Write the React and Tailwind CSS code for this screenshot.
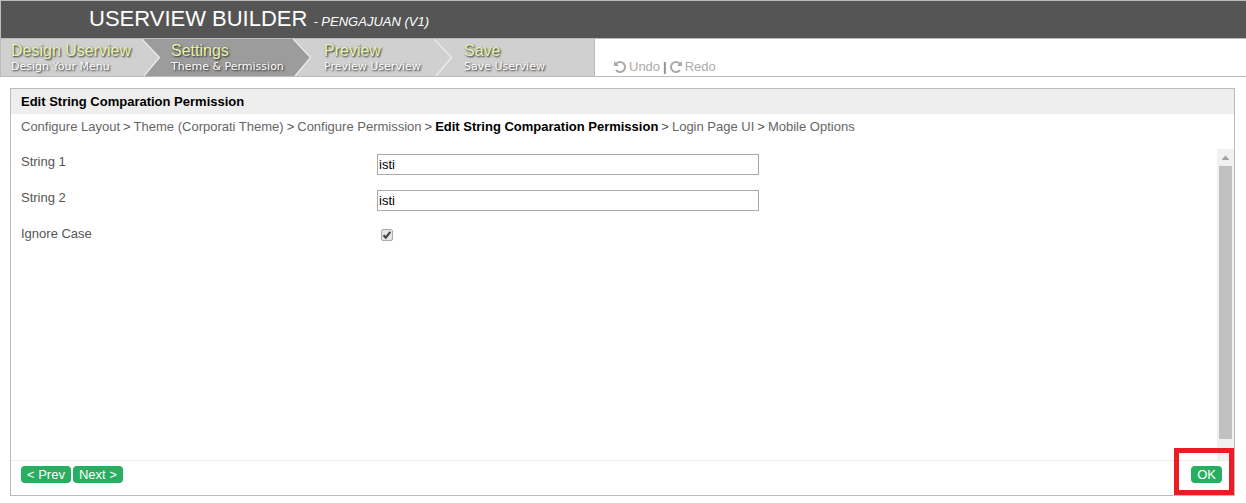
const steps = [
  { title: "Design Userview", sub: "Design Your Menu", box: "w-[141px] pl-[10px] bg-[#d0d0d0]", tip: "#d0d0d0" },
  { title: "Settings", sub: "Theme & Permission", box: "w-[151px] pl-[29px] bg-[#9c9c9c]", tip: "#9c9c9c" },
  { title: "Preview", sub: "Preview Userview", box: "w-[141px] pl-[31px] bg-[#d0d0d0]", tip: "#d0d0d0" },
  { title: "Save", sub: "Save Userview", box: "w-[160px] pl-[30px] bg-[#d0d0d0]", tip: null },
];

const crumbs = [
  "Configure Layout",
  "Theme (Corporati Theme)",
  "Configure Permission",
  "Edit String Comparation Permission",
  "Login Page UI",
  "Mobile Options",
];

function TurnIcon({ className = "" }) {
  return (
    <svg className={className} width="12" height="12" viewBox="0 128 1536 1536" fill="currentColor" aria-hidden="true">
      <path d="M1536 896q0 156-61 298t-164 245-245 164-298 61q-172 0-327-72.500t-264-204.500q-7-10-6.500-22.500t8.500-20.500l137-138q10-9 25-9 16 2 23 12 73 95 179 147t225 52q104 0 198.500-40.500t163.500-109.500 109.500-163.500 40.500-198.500-40.500-198.500-109.500-163.500-163.500-109.500-198.500-40.500q-98 0-188 35.500t-160 101.500l137 138q31 30 14 69-17 40-59 40h-448q-26 0-45-19t-19-45v-448q0-42 40-59 39-17 69 14l130 129q107-101 244.500-156.500t284.500-55.500q156 0 298 61t245 164 164 245 61 298z" />
    </svg>
  );
}

function Step({ title, sub, box, tip }) {
  return (
    <li className={`relative h-[37px] ${box}`}>
      <a href="#" className="block pt-[2px] whitespace-nowrap">
        <span className="block text-[16px] leading-[19px] text-[#e6f4ac] [text-shadow:1px_1px_2px_#222]">{title}</span>
        <span className="block font-['DejaVu_Sans',sans-serif] text-[11px] leading-[13px] text-white [text-shadow:1px_1px_2px_#222]">{sub}</span>
      </a>
      {tip && (
        <svg className="absolute top-0 left-full z-10" width="19" height="37" viewBox="0 0 19 37" aria-hidden="true">
          <path d="M0 0L17.500 18.500L2 37H0Z" fill={tip} />
          <path d="M0 0L17.500 18.500L2 37" fill="none" stroke="#eee" strokeWidth="1.200" />
        </svg>
      )}
    </li>
  );
}

function Field({ id, label, children }) {
  return (
    <div className="flex h-[36px] items-start">
      <label htmlFor={id} className="w-[356px] shrink-0 leading-[16px]">{label}</label>
      {children}
    </div>
  );
}

const button = "h-[17px] rounded-[4px] bg-[#27ae60] px-[6px] text-[13px] leading-[17px] text-white";
const input = "h-[21px] w-[382px] border border-[#a9a9a9] px-px text-[13px] text-black";

export default function App() {
  return (
    <div className="min-h-screen bg-white font-['Liberation_Sans',Arial,sans-serif] text-[13px] text-[#555]">
      <header className="flex h-[38px] items-baseline border-t border-l border-[#bbb] bg-[#555] pl-[88px] text-white">
        <h1 className="text-[22px] leading-[36px]">USERVIEW BUILDER</h1>
        <span className="pl-[6px] text-[13px] italic">- PENGAJUAN (V1)</span>
      </header>
      <nav className="flex h-[39px] border-y border-l border-[#bbb]">
        <ol className="flex border-r border-[#bbb]">
          {steps.map((s) => <Step key={s.title} {...s} />)}
        </ol>
        <div className="flex items-center gap-[3px] pt-[18px] pl-[19px] leading-[16px] text-[#aaa]">
          <button className="flex items-center gap-[3px]"><TurnIcon />Undo</button>
          <span className="font-bold text-[#888]">|</span>
          <button className="flex items-center gap-[3px]"><TurnIcon className="-scale-x-100" />Redo</button>
        </div>
      </nav>
      <main className="relative mt-[11px] mr-[11px] ml-[10px] border border-[#bbb]">
        <h2 className="h-[25px] bg-[#eee] pl-[10px] font-bold leading-[25px] text-black">Edit String Comparation Permission</h2>
        <nav className="flex h-[35px] gap-[3px] pt-[5px] pl-[10px] leading-[16px]">
          {crumbs.map((c, i) => (
            <span key={c} className="flex gap-[3px]">
              {i > 0 && <span>&gt;</span>}
              <a href="#" className={i === 3 ? "font-bold text-black" : "text-[#666]"}>{c}</a>
            </span>
          ))}
        </nav>
        <div className="flex h-[311px]">
          <form className="grow pt-[5px] pl-[10px]">
            <Field id="s1" label="String 1"><input id="s1" defaultValue="isti" className={input} /></Field>
            <Field id="s2" label="String 2"><input id="s2" defaultValue="isti" className={input} /></Field>
            <Field id="ic" label="Ignore Case">
              <span className="grid pt-[3px] pl-[4px]">
                <input id="ic" type="checkbox" defaultChecked className="peer col-start-1 row-start-1 size-[12px] appearance-none rounded-[2px] border border-[#aaa] bg-[#e4e4e4]" />
                <svg className="pointer-events-none invisible col-start-1 row-start-1 peer-checked:visible" width="12" height="12" viewBox="0 0 12 12" aria-hidden="true">
                  <path d="M2.500 6.300L4.800 8.600L9.300 2.800" fill="none" stroke="#444" strokeWidth="2.200" />
                </svg>
              </span>
            </Field>
          </form>
          <div className="flex w-[17px] flex-col items-center bg-[#f1f1f1]">
            <svg width="17" height="17" viewBox="0 0 17 17" aria-hidden="true"><path d="M4.500 11L8.500 6.500L12.500 11Z" fill="#a3a3a3" /></svg>
            <div className="h-[273px] w-[13px] bg-[#c1c1c1]" />
          </div>
        </div>
        <footer className="flex h-[35px] items-start border-t border-[#eee] pt-[5px] pr-[12px] pl-[10px]">
          <button className={button}>&lt; Prev</button>
          <button className={`ml-[2px] ${button}`}>Next &gt;</button>
          <button className={`ml-auto ${button}`}>OK</button>
        </footer>
        <div className="pointer-events-none absolute right-0 bottom-0 h-[47px] w-[60px] border-5 border-[#ed1c24]" />
      </main>
    </div>
  );
}
